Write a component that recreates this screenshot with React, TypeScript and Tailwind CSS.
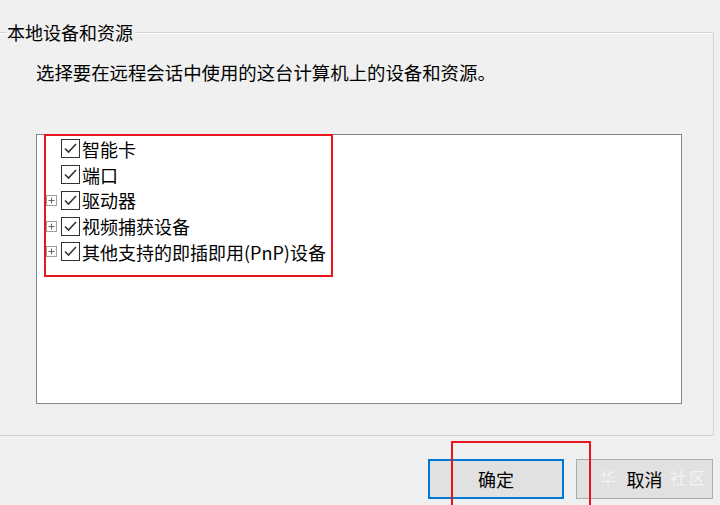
import React from "react";

const items = [
  { label: "智能卡", expandable: false },
  { label: "端口", expandable: false },
  { label: "驱动器", expandable: true },
  { label: "视频捕获设备", expandable: true },
  { label: "其他支持的即插即用(PnP)设备", expandable: true },
];

const font = { fontFamily: '"Noto Sans CJK SC", "Noto Sans", sans-serif' };

function CheckBox() {
  return (
    <svg width="19" height="19" viewBox="0 0 19 19" className="shrink-0">
      <rect x="0.5" y="0.5" width="18" height="18" fill="#fff" stroke="#333" />
      <polyline
        points="4,9.5 7.5,13 15,5"
        fill="none"
        stroke="#333"
        strokeWidth="1.6"
      />
    </svg>
  );
}

function PlusBox() {
  return (
    <svg width="11" height="11" viewBox="0 0 11 11" className="shrink-0">
      <rect x="0.5" y="0.5" width="10" height="10" fill="#fff" stroke="#a0a0a0" />
      <line x1="2.5" y1="5.5" x2="8.5" y2="5.5" stroke="#666" />
      <line x1="5.5" y1="2.5" x2="5.5" y2="8.5" stroke="#666" />
    </svg>
  );
}

export default function App() {
  return (
    <div
      className="relative w-[720px] h-[505px] overflow-hidden bg-[#f0f0f0] text-black flex flex-col"
      style={font}
    >
      {/* group box */}
      <div className="relative mt-[32px] -ml-[2px] w-[716px] h-[404px] border border-[#d5d5d5] shadow-[inset_1px_1px_0_#ffffff]">
        <span className="absolute left-[8px] -top-[14px] bg-[#f0f0f0] text-[18px] leading-[26px] pr-[2px]">
          本地设备和资源
        </span>
        <div className="pl-[37px] pt-[26px] flex flex-col">
          <p className="text-[18.4px] leading-[26px]">
            选择要在远程会话中使用的这台计算机上的设备和资源。
          </p>
          <div className="mt-[49px] w-[646px] h-[270px] bg-white border border-[#828790] pt-[1px]">
            {items.map((it) => (
              <div key={it.label} className="h-[25.75px] flex items-center">
                <div className="w-[24px] pl-[9px] flex items-center">
                  {it.expandable && <PlusBox />}
                </div>
                <CheckBox />
                <span className="ml-[2px] text-[18px] leading-[26px] whitespace-nowrap">
                  {it.label}
                </span>
              </div>
            ))}
          </div>
        </div>
      </div>

      {/* buttons */}
      <div className="flex pl-[428px] mt-[23px] gap-[12px]">
        <button className="w-[136px] h-[40px] bg-[#e1e1e1] border-2 border-[#0078d7] text-[18px]">
          确定
        </button>
        <button className="w-[137px] h-[40px] bg-[#e1e1e1] border border-[#adadad] text-[18px]">
          取消
        </button>
      </div>

      {/* watermark */}
      <span className="absolute left-[600px] top-[465px] text-[16px] text-white/60">华</span>
      <span className="absolute left-[670px] top-[465px] text-[16px] text-white/60 tracking-[3px]">社区</span>

      {/* red annotation boxes */}
      <div className="absolute left-[44px] top-[134px] w-[289px] h-[143px] border-2 border-[#e8141e]" />
      <div className="absolute left-[451px] top-[441px] w-[140px] h-[80px] border-2 border-[#e8141e]" />
    </div>
  );
}
